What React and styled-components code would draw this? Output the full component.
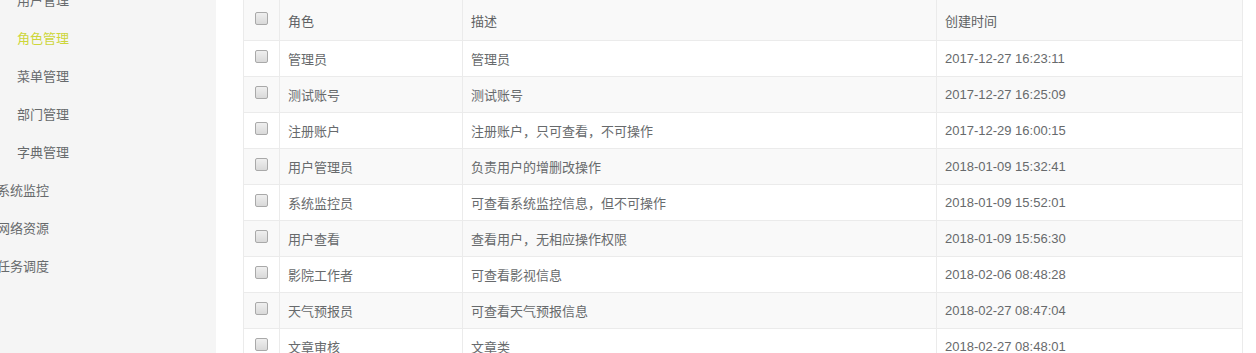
import styled, { createGlobalStyle } from "styled-components";

const GlobalStyle = createGlobalStyle`
  html, body {
    margin: 0;
    padding: 0;
    background: #ffffff;
    overflow: hidden;
  }
  body {
    font-family: "Liberation Sans", "Noto Sans CJK SC", sans-serif;
    font-size: 13px;
    color: #676a6c;
  }
`;

const Pagina = styled.div`
  display: flex;
  width: 1256px;
  height: 353px;
  overflow: hidden;
`;

const Lateral = styled.aside`
  width: 216px;
  flex-shrink: 0;
  background-color: #f5f5f5;
  overflow: hidden;
`;

const Menu = styled.ul`
  list-style: none;
  margin: -18px 0 0 -3px;
  padding: 0;
`;

const ItemMenu = styled.li`
  height: 38px;
  line-height: 38px;
  padding-left: ${(p) => (p.$sub ? "20px" : "0")};
  color: ${(p) => (p.$ativo ? "#cdd63a" : "#676a6c")};
  white-space: nowrap;
`;

const Conteudo = styled.main`
  flex-grow: 1;
  padding-left: 27px;
`;

const Tabela = styled.div`
  width: 1000px;
  margin-top: -1px;
  border-top: 1px solid #ebebeb;
`;

const Linha = styled.div`
  display: grid;
  grid-template-columns: 36px 183px 474px 307px;
  height: ${(p) => (p.$cabecalho ? "41px" : "36px")};
  background-color: ${(p) => (p.$listrada ? "#f9f9f9" : "#ffffff")};
  border-bottom: 1px solid #ebebeb;
  box-sizing: border-box;
`;

const Celula = styled.div`
  display: flex;
  align-items: center;
  padding: 0 8px;
  border-left: 1px solid #ebebeb;
  white-space: nowrap;
  color: ${(p) => (p.$cabecalho ? "#5e6163" : "#676a6c")};

  &:last-child {
    border-right: 1px solid #ebebeb;
  }
`;

const CelulaCaixa = styled.div`
  display: flex;
  justify-content: center;
  align-items: flex-start;
  padding-top: ${(p) => (p.$cabecalho ? "12px" : "9px")};
  border-left: 1px solid #ebebeb;
  box-sizing: border-box;
`;

const Caixa = styled.input.attrs({ type: "checkbox" })`
  appearance: none;
  margin: 0;
  width: 13px;
  height: 13px;
  border: 1px solid #a9a9a9;
  border-radius: 2px;
  background: linear-gradient(#efefef, #d9d9d9);
  box-sizing: border-box;
`;

const menu = [
  { nome: "用户管理", sub: true },
  { nome: "角色管理", sub: true, ativo: true },
  { nome: "菜单管理", sub: true },
  { nome: "部门管理", sub: true },
  { nome: "字典管理", sub: true },
  { nome: "系统监控" },
  { nome: "网络资源" },
  { nome: "任务调度" },
];

const papeis = [
  ["管理员", "管理员", "2017-12-27 16:23:11"],
  ["测试账号", "测试账号", "2017-12-27 16:25:09"],
  ["注册账户", "注册账户，只可查看，不可操作", "2017-12-29 16:00:15"],
  ["用户管理员", "负责用户的增删改操作", "2018-01-09 15:32:41"],
  ["系统监控员", "可查看系统监控信息，但不可操作", "2018-01-09 15:52:01"],
  ["用户查看", "查看用户，无相应操作权限", "2018-01-09 15:56:30"],
  ["影院工作者", "可查看影视信息", "2018-02-06 08:48:28"],
  ["天气预报员", "可查看天气预报信息", "2018-02-27 08:47:04"],
  ["文章审核", "文章类", "2018-02-27 08:48:01"],
];

const App = () => {
  return (
    <Pagina>
      <GlobalStyle />
      <Lateral>
        <Menu>
          {menu.map((item) => (
            <ItemMenu key={item.nome} $sub={item.sub} $ativo={item.ativo}>
              {item.nome}
            </ItemMenu>
          ))}
        </Menu>
      </Lateral>
      <Conteudo>
        <Tabela>
          <Linha $cabecalho $listrada>
            <CelulaCaixa $cabecalho>
              <Caixa />
            </CelulaCaixa>
            <Celula $cabecalho>角色</Celula>
            <Celula $cabecalho>描述</Celula>
            <Celula $cabecalho>创建时间</Celula>
          </Linha>
          {papeis.map(([papel, descricao, data], i) => (
            <Linha key={papel} $listrada={i % 2 === 1}>
              <CelulaCaixa>
                <Caixa />
              </CelulaCaixa>
              <Celula>{papel}</Celula>
              <Celula>{descricao}</Celula>
              <Celula>{data}</Celula>
            </Linha>
          ))}
        </Tabela>
      </Conteudo>
    </Pagina>
  );
};

export default App;
